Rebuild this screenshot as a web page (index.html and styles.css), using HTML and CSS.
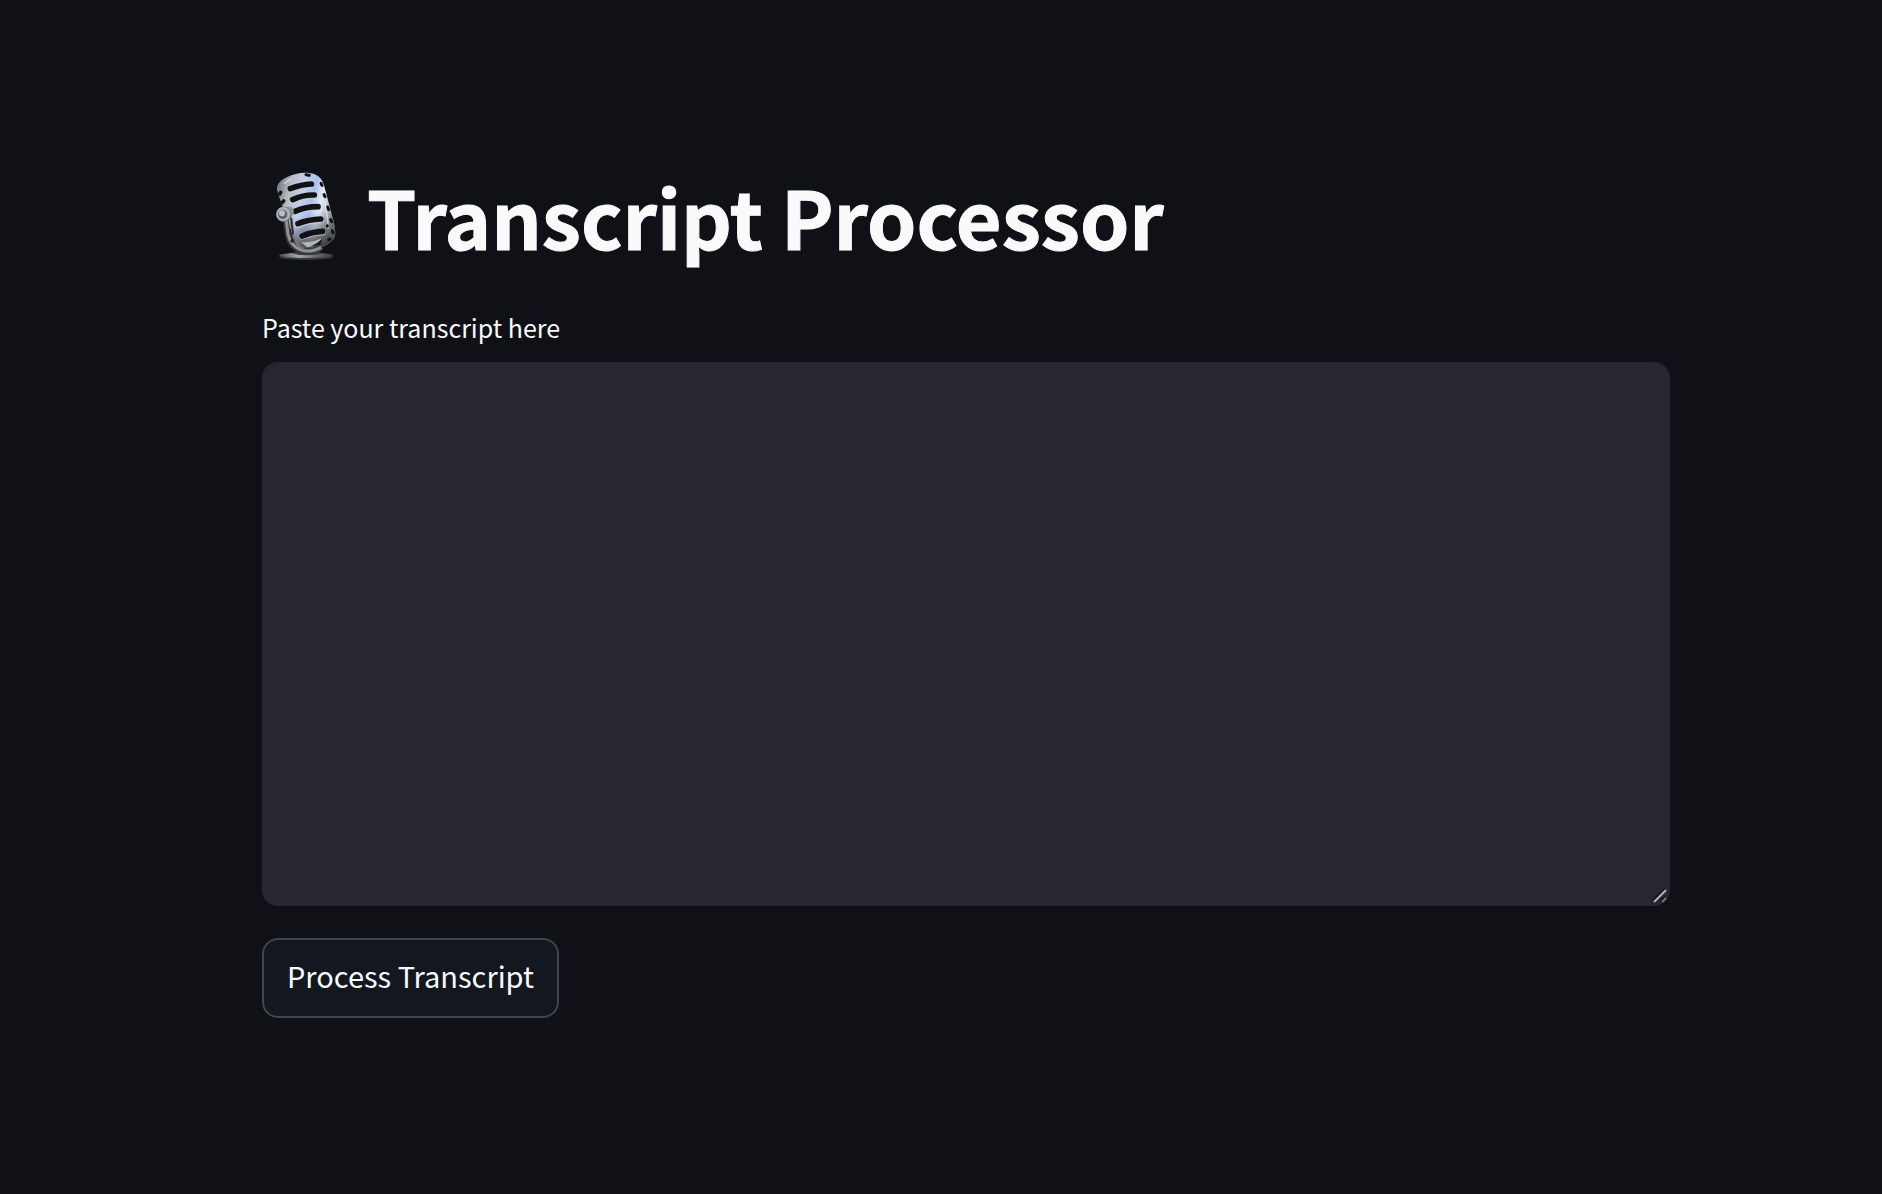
FILE: index.html
```html
<!DOCTYPE html>
<html lang="en">
<head>
<meta charset="utf-8">
<meta name="viewport" content="width=device-width, initial-scale=1">
<title>Transcript Processor</title>
<link rel="stylesheet" href="styles.css">
</head>
<body>
<main class="page">
  <h1 class="title">
    <svg class="mic" viewBox="48 36 180 264" aria-hidden="true">
      <defs>
        <linearGradient id="chrome" x1="0" y1="0.2" x2="1" y2="0.5">
          <stop offset="0" stop-color="#77797f"/>
          <stop offset="0.2" stop-color="#b9bcc4"/>
          <stop offset="0.42" stop-color="#c2d0eb"/>
          <stop offset="0.6" stop-color="#abc0e9"/>
          <stop offset="0.74" stop-color="#e4ecfc"/>
          <stop offset="0.9" stop-color="#b3b7c1"/>
          <stop offset="1" stop-color="#85878c"/>
        </linearGradient>
        <linearGradient id="shade" x1="0" y1="0" x2="0.2" y2="1">
          <stop offset="0.6" stop-color="#55575c" stop-opacity="0"/>
          <stop offset="1" stop-color="#3b3b3f" stop-opacity="0.9"/>
        </linearGradient>
        <linearGradient id="base" x1="0" y1="0" x2="1" y2="0">
          <stop offset="0" stop-color="#4b4b4c"/>
          <stop offset="0.35" stop-color="#a2a9af"/>
          <stop offset="0.6" stop-color="#77797c"/>
          <stop offset="1" stop-color="#3d3d3e"/>
        </linearGradient>
        <clipPath id="head"><path d="M51 90C49 72 62 60 82 51C105 38 140 34 162 42C186 52 190 67 196 90L219 177C224 194 228 218 224 232C216 251 178 269 145 270C119 270 106 253 100 229L65 133Z"/></clipPath>
      </defs>
      <ellipse cx="138" cy="291" rx="81" ry="9" fill="#353638"/>
      <ellipse cx="138" cy="286" rx="81" ry="8" fill="url(#base)"/>
      <path d="M110 271Q138 290 174 268L185 281Q138 290 99 281Z" fill="#393a3d"/>
      <path d="M51 90C49 72 62 60 82 51C105 38 140 34 162 42C186 52 190 67 196 90L219 177C224 194 228 218 224 232C216 251 178 269 145 270C119 270 106 253 100 229L65 133Z" fill="url(#chrome)"/>
      <g clip-path="url(#head)">
        <path d="M48 36H230V280H48Z" fill="url(#shade)"/>
        <path d="M73 72Q77 64 94 58M178 67Q199 120 205 206" fill="none" stroke="#e4e7ed" stroke-width="5" opacity="0.65"/>
        <g stroke="#ccd3df" stroke-width="20" stroke-linecap="round" fill="none" opacity="0.7">
          <path d="M91 88Q124 74 154 74M98 122Q130 106 163 107M105 157Q138 143 174 142M114 194Q146 181 182 179M126 229Q158 218 188 216"/>
        </g>
        <g stroke="#111214" stroke-width="17" stroke-linecap="round" fill="none">
          <path d="M91 86Q124 73 154 72M98 119Q130 104 163 105M105 154Q138 140 174 140M114 191Q146 178 182 177M126 228Q158 215 188 214"/>
          <path d="M59 102L62 97M62 132L71 123" stroke-width="11"/>
          <path d="M183 70L186 76M192 104L195 110M203 141L206 149M212 179L215 185M217 212L219 218M206 239L210 237" stroke-width="9"/>
          <path d="M138 44L148 46M202 197L202 198" stroke-width="9"/>
        </g>
        <path d="M124 246Q156 249 184 235Q180 257 141 262Z" fill="#b4b7bc"/>
        <path d="M153 258Q174 249 186 237L182 254Z" fill="#1b1b1d"/>
      </g>
      <path d="M75 166L84 225Q91 260 119 269Q146 282 185 262" fill="none" stroke="#39393d" stroke-width="18"/>
      <path d="M77 166L84 222Q90 255 119 268Q147 281 184 262" fill="none" stroke="#929396" stroke-width="9"/>
      <path d="M91 167L99 226Q105 256 132 268" fill="none" stroke="#777374" stroke-width="7"/>
      <path d="M94 174L99 223" fill="none" stroke="#27262a" stroke-width="5"/>
      <circle cx="97" cy="242" r="6" fill="#242427"/>
      <path d="M69 140H93Q106 148 99 165L75 179Z" fill="#909398"/>
      <circle cx="71" cy="163" r="23" fill="#696b70"/>
      <circle cx="70" cy="162" r="21" fill="#b1b4b9"/>
      <circle cx="68" cy="163" r="14" fill="#5d636e"/>
      <circle cx="66" cy="160" r="9" fill="#b9c0ca"/>
    </svg>
    <span>Transcript Processor</span>
  </h1>
  <form class="form">
    <label class="label" for="transcript">Paste your transcript here</label>
    <textarea class="transcript" id="transcript"></textarea>
    <button class="process" type="button">Process Transcript</button>
  </form>
</main>
</body>
</html>
```
FILE: styles.css
```css
* {
  box-sizing: border-box;
}

body {
  margin: 0;
  background: #101116;
  color: #fafafa;
  font-family: "Noto Sans CJK SC", "Noto Sans", sans-serif;
}

.page {
  padding: 163px 212px 176px 262px;
}

.title {
  display: flex;
  align-items: center;
  gap: 31px;
  margin: 0 0 37px;
  padding-left: 14px;
  font-size: 79px;
  font-weight: 700;
  line-height: 106px;
  -webkit-text-stroke: 1px #fafafa;
}

.mic {
  flex: none;
  width: 60px;
  height: 88px;
}

.form {
  display: flex;
  flex-direction: column;
  align-items: flex-start;
}

.label {
  margin-bottom: 14px;
  font-size: 25px;
  line-height: 42px;
}

.transcript {
  display: block;
  width: 100%;
  height: 544px;
  margin-bottom: 32px;
  padding: 24px;
  border: 2px solid #262730;
  border-radius: 16px;
  outline: none;
  background: #262730;
  color: inherit;
  font: inherit;
  font-size: 29px;
  resize: vertical;
}

.transcript::-webkit-resizer {
  background: url("data:image/svg+xml,%3Csvg xmlns='http://www.w3.org/2000/svg' width='15' height='15' fill='none' stroke-width='2'%3E%3Cpath d='M0 12L12 0M8 12L12 8' stroke='%23101116'/%3E%3Cpath d='M1 13L13 1' stroke='%23b4b4b6'/%3E%3Cpath d='M9 13L13 9' stroke='%2377777b'/%3E%3C/svg%3E") no-repeat;
}

.process {
  padding: 13px 23px 19px;
  border: 2px solid #41444c;
  border-radius: 16px;
  background: #131720;
  color: inherit;
  font: inherit;
  font-size: 29px;
  line-height: 44px;
}
```
